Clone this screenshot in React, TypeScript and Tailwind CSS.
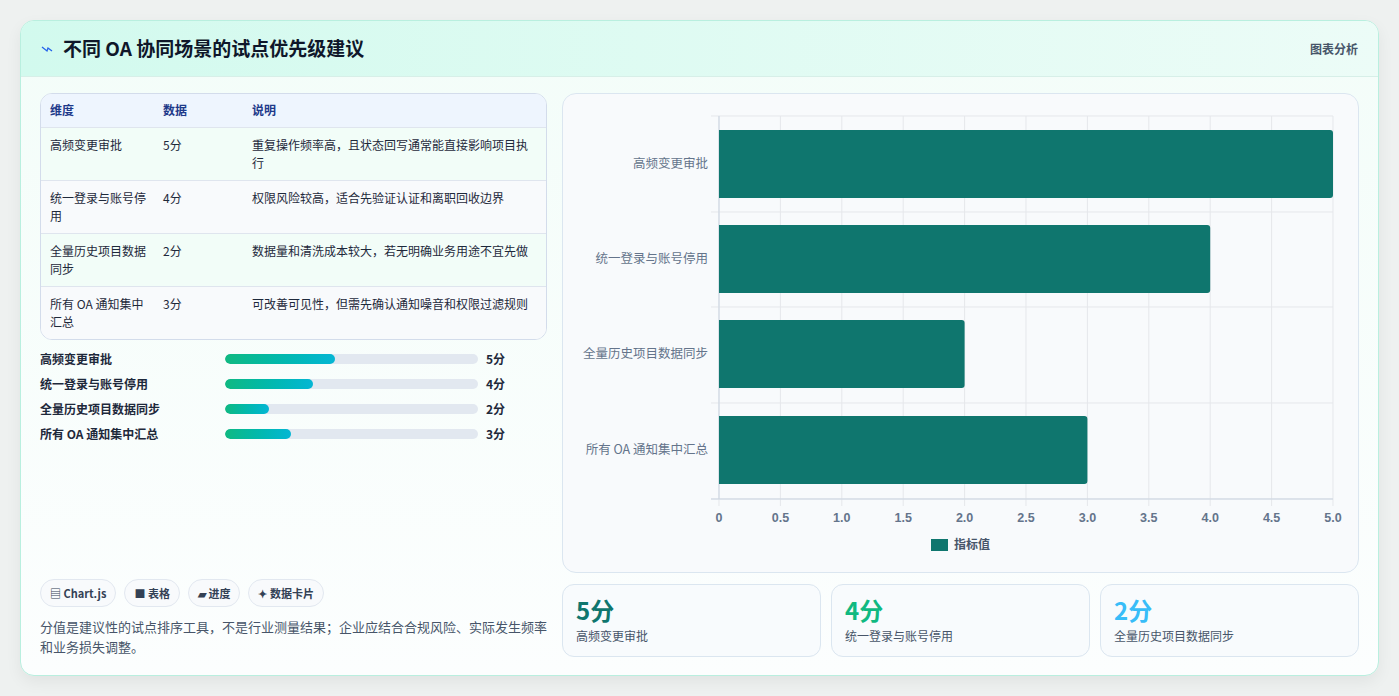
import React from "react";

const rows = [
  { name: "高频变更审批", v: 5, d: "重复操作频率高，且状态回写通常能直接影响项目执行" },
  { name: "统一登录与账号停用", v: 4, d: "权限风险较高，适合先验证认证和离职回收边界" },
  { name: "全量历史项目数据同步", v: 2, d: "数据量和清洗成本较大，若无明确业务用途不宜先做" },
  { name: "所有 OA 通知集中汇总", v: 3, d: "可改善可见性，但需先确认通知噪音和权限过滤规则" },
];

function Chart() {
  const x0 = 156, x1 = 770, W = x1 - x0;
  const ticks = [0, 0.5, 1, 1.5, 2, 2.5, 3, 3.5, 4, 4.5, 5];
  const centers = [70, 165, 260, 356];
  return (
    <svg width="795" height="478" className="block" style={{ fontFamily: "'Liberation Sans','Noto Sans CJK SC',sans-serif" }}>
      {ticks.map((t) => {
        const x = x0 + (t / 5) * W;
        return <line key={t} x1={x} x2={x} y1={22} y2={412} stroke="#e5e7eb" strokeWidth="1" />;
      })}
      {[22, 118, 213, 309, 405].map((y) => (
        <line key={y} x1={x0 - 8} x2={x1} y1={y} y2={y} stroke="#e5e7eb" strokeWidth="1" />
      ))}
      <line x1={x0 - 8} x2={x1} y1={405} y2={405} stroke="#cbd5e1" strokeWidth="1" />
      <line x1={x0} x2={x0} y1={22} y2={405} stroke="#cbd5e1" strokeWidth="1" />
      {rows.map((r, i) => (
        <g key={r.name}>
          <path
            d={`M${x0} ${centers[i] - 34} H${x0 + (r.v / 5) * W - 3} a3 3 0 0 1 3 3 V${centers[i] + 31} a3 3 0 0 1 -3 3 H${x0} Z`}
            fill="#0f766e"
          />
          <text x={145} y={centers[i] + 4} textAnchor="end" fontSize="12.5" fill="#64748b" fontFamily="'Noto Sans CJK SC',sans-serif">{r.name}</text>
        </g>
      ))}
      {ticks.map((t) => (
        <text key={t} x={x0 + (t / 5) * W} y={428} textAnchor="middle" fontSize="12.5" fontWeight="bold" fill="#64748b">
          {t === 0 ? "0" : t.toFixed(1)}
        </text>
      ))}
      <rect x={368} y={445} width={17} height={12} fill="#0f766e" />
      <text x={391} y={455} fontSize="12" fontWeight="bold" fill="#475569" fontFamily="'Noto Sans CJK SC',sans-serif">指标值</text>
    </svg>
  );
}

export default function App() {
  return (
    <div className="w-[1399px] h-[696px] bg-[#eef1f0] p-[20px] pb-0" style={{ fontFamily: "'Noto Sans CJK SC','Noto Sans',sans-serif" }}>
      <div className="h-[656px] rounded-[14px] border border-[#b9efdf] bg-gradient-to-b from-[#f3fdf9] to-[#fcfefe] overflow-hidden shadow-[0_6px_16px_rgba(0,0,0,0.06)] flex flex-col">
        <div className="h-[56px] flex items-center justify-between px-[20px] bg-gradient-to-r from-[#d2faee] to-[#ecfcf7] border-b border-[#d7efe8]">
          <div className="flex items-center gap-[10px]">
            <svg width="12" height="8" viewBox="0 0 12 8"><path d="M1 2 L6 6 L7 3 L11 6" stroke="#2563eb" strokeWidth="1.3" fill="none" /></svg>
            <span className="text-[19px] font-bold text-[#0f172a]">不同 OA 协同场景的试点优先级建议</span>
          </div>
          <span className="text-[12px] font-bold text-[#475569]">图表分析</span>
        </div>
        <div className="flex-1 flex gap-[15px] px-[19px] pt-[16px] pb-[18px]">
          <div className="w-[510px] flex flex-col">
            <div className="rounded-[12px] border border-[#d3dceb] overflow-hidden bg-white">
              <table className="w-full text-[12px] text-[#1e293b]">
                <thead>
                  <tr className="bg-[#eef5fe] text-[#1e3a8a] font-bold text-left h-[33px]">
                    <th className="pl-[9px] w-[122px] font-bold">维度</th>
                    <th className="w-[89px] font-bold">数据</th>
                    <th className="font-bold">说明</th>
                  </tr>
                </thead>
                <tbody>
                  {rows.map((r, i) => (
                    <tr key={r.name} className={`border-t border-[#dfe5ee] align-top h-[53px] ${i % 2 === 0 ? "bg-[#f2fdf8]" : "bg-[#f8fafc]"}`}>
                      <td className="pl-[9px] pr-[10px] pt-[8px] leading-[18px]">{r.name}</td>
                      <td className="pt-[8px] leading-[18px]">{r.v}分</td>
                      <td className="pt-[8px] pr-[8px] leading-[18px]">{r.d}</td>
                    </tr>
                  ))}
                </tbody>
              </table>
            </div>
            <div className="mt-[10px] flex flex-col gap-[7px]">
              {rows.map((r) => (
                <div key={r.name} className="flex items-center h-[18px] text-[12px] font-bold text-[#1e293b]">
                  <span className="w-[185px]">{r.name}</span>
                  <div className="w-[253px] h-[10px] rounded-full bg-[#e2e8f0] overflow-hidden">
                    <div className="h-full rounded-full bg-gradient-to-r from-[#10b981] to-[#06b6d4]" style={{ width: `${r.v * 8.7}%` }} />
                  </div>
                  <span className="ml-[8px]">{r.v}分</span>
                </div>
              ))}
            </div>
            <div className="mt-auto">
              <div className="flex gap-[8px] text-[11px] font-bold text-[#334155]">
                {["▤ Chart.js", "■ 表格", "▰ 进度", "✦ 数据卡片"].map((t) => (
                  <span key={t} className="h-[28px] px-[9px] rounded-full border border-[#e2e8f0] bg-[#f8fafc] flex items-center">{t}</span>
                ))}
              </div>
              <p className="mt-[10px] text-[13px] leading-[20px] text-[#475569]">
                分值是建议性的试点排序工具，不是行业测量结果；企业应结合合规风险、实际发生频率和业务损失调整。
              </p>
            </div>
          </div>
          <div className="flex-1 flex flex-col gap-[11px]">
            <div className="h-[480px] rounded-[14px] border border-[#dbe6f0] bg-[#f8fafc] overflow-hidden">
              <Chart />
            </div>
            <div className="flex gap-[10px]">
              {[
                { v: "5分", c: "text-[#0f766e]", n: "高频变更审批" },
                { v: "4分", c: "text-[#10b981]", n: "统一登录与账号停用" },
                { v: "2分", c: "text-[#38bdf8]", n: "全量历史项目数据同步" },
              ].map((s) => (
                <div key={s.n} className="flex-1 h-[73px] rounded-[12px] border border-[#dbe6f0] bg-[#f8fbfd] px-[13px] pt-[10px]">
                  <div className={`text-[24px] font-bold leading-[30px] ${s.c}`}>{s.v}</div>
                  <div className="text-[12px] text-[#475569] mt-[2px]">{s.n}</div>
                </div>
              ))}
            </div>
          </div>
        </div>
      </div>
    </div>
  );
}
